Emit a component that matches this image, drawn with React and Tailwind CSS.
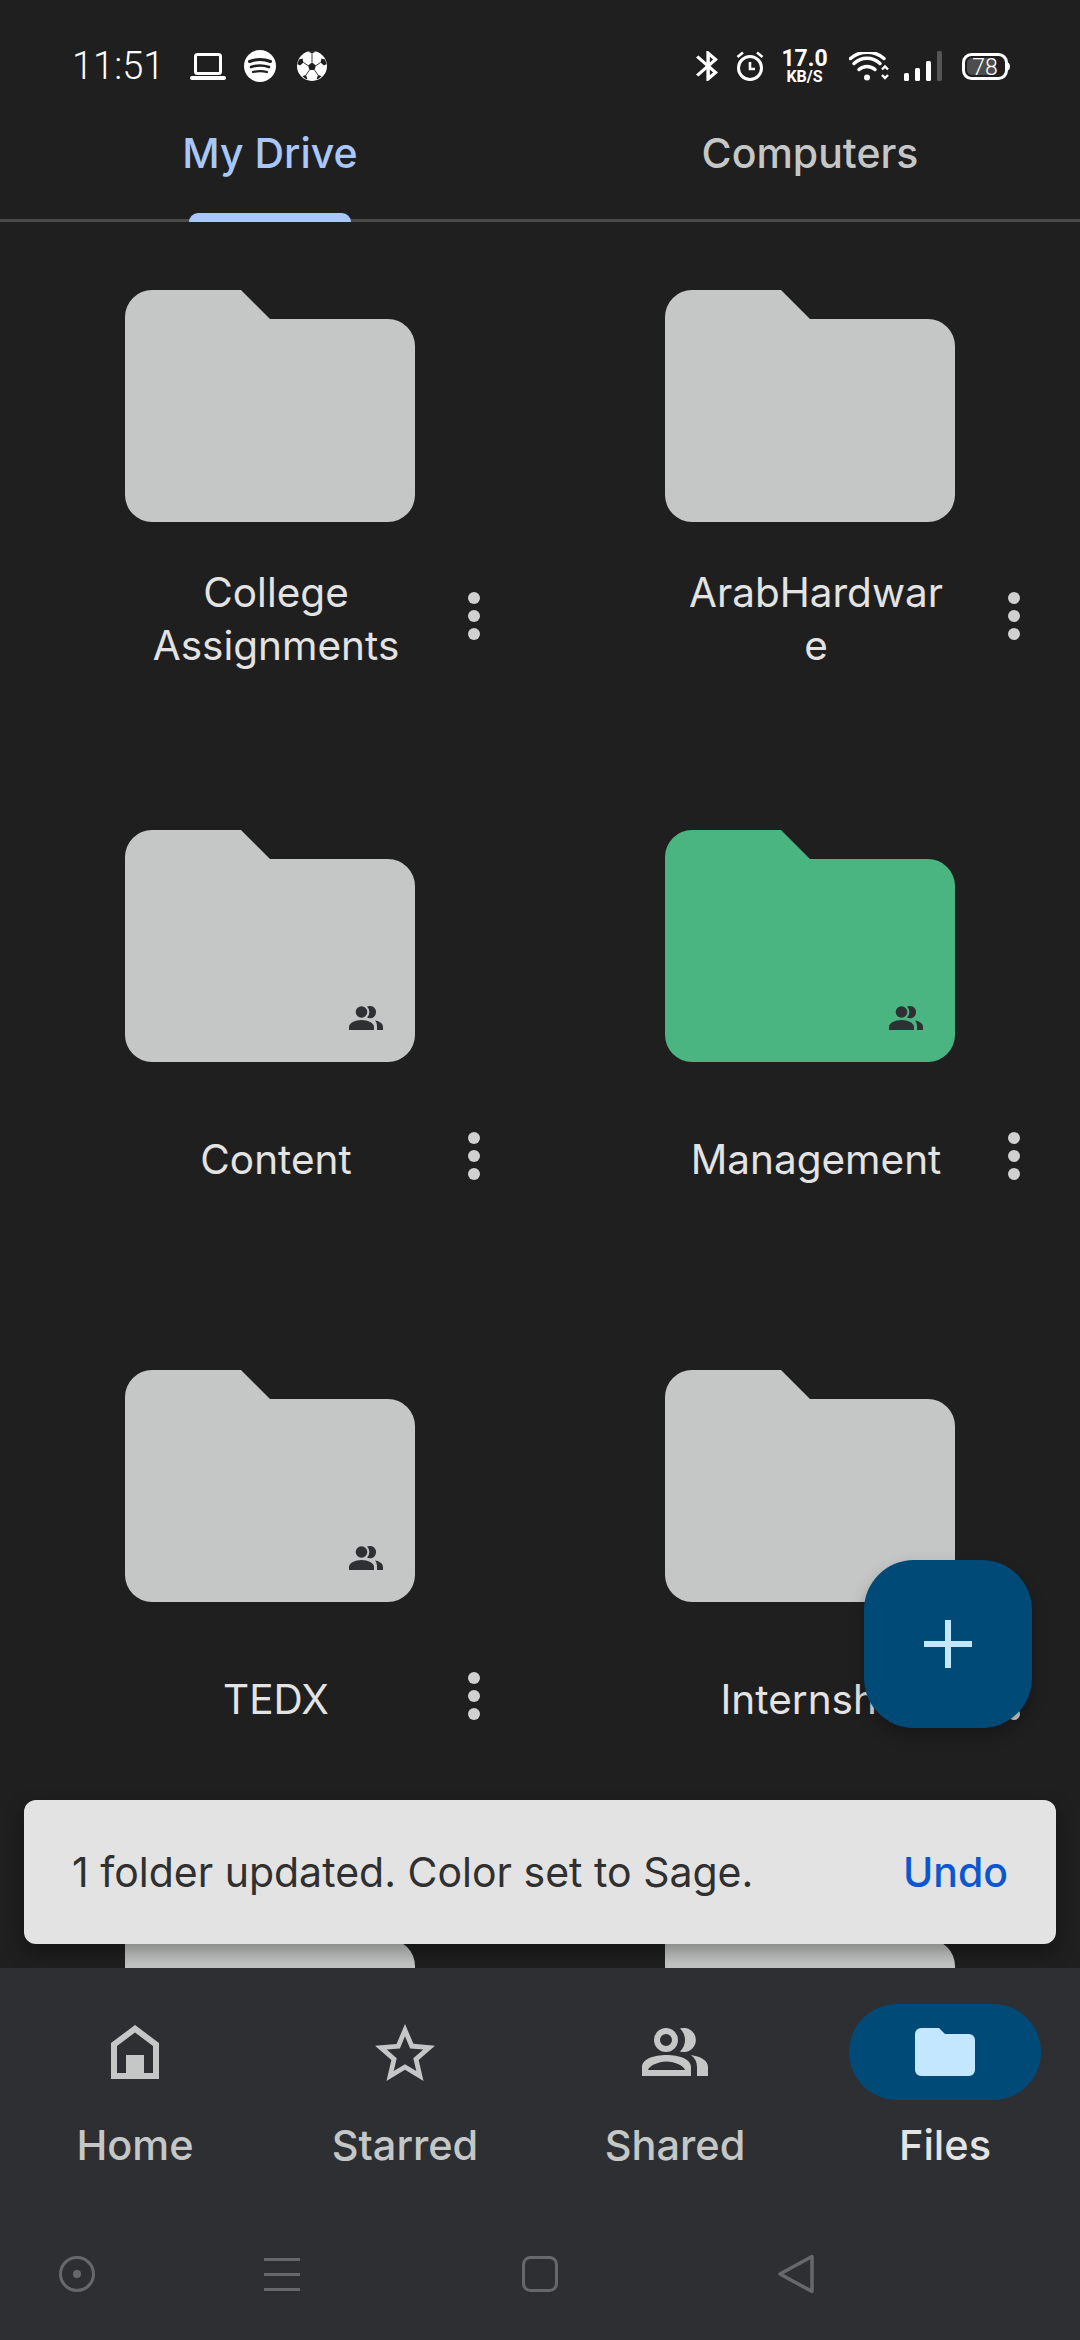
import React from "react";

const folders = [
  { name: "College Assignments", color: "#c4c7c5" },
  { name: "ArabHardware", color: "#c4c7c5" },
  { name: "Content", color: "#c4c7c5", shared: true },
  { name: "Management", color: "#4ab580", shared: true },
  { name: "TEDX", color: "#c4c7c5", shared: true },
  { name: "Internship", color: "#c4c7c5" },
  { name: "", color: "#c4c7c5" },
  { name: "", color: "#c4c7c5" },
];

const Folder = ({ color, shared }) => (
  <svg width="290" height="232" viewBox="0 0 290 232" className="block">
    <path
      d="M27 0H116L145 29H263A27 27 0 0 1 290 56V205A27 27 0 0 1 263 232H27A27 27 0 0 1 0 205V27A27 27 0 0 1 27 0Z"
      fill={color}
    />
    {shared && (
      <g transform="translate(224 176)" fill="#2e3033">
        <circle cx="12.5" cy="6" r="5.8" />
        <path d="M0 24V21C0 17 6 14 12.5 14S25 17 25 21V24Z" />
        <path d="M18 .6A6.2 6.2 0 1 1 18 11.6 7.6 7.6 0 0 0 18 .6Z" />
        <path d="M26 14.5C30.5 15.2 34 17.5 34 21V24H28V21C28 18.4 27.5 16 26 14.5Z" />
      </g>
    )}
  </svg>
);

const FolderCard = ({ name, color, shared }) => (
  <div>
    <div className="pl-[125px]">
      <Folder color={color} shared={shared} />
    </div>
    {name && (
      <div className="mt-[40px] flex h-[108px] items-center pl-[146px]">
        <p className="w-[260px] break-words pt-[6px] text-center text-[40.5px] leading-[53px] text-[#e3e3e3]">{name}</p>
        <div className="ml-[62px] flex flex-col gap-[6px]">
          <span className="size-3 rounded-full bg-[#cfd0cf]" />
          <span className="size-3 rounded-full bg-[#cfd0cf]" />
          <span className="size-3 rounded-full bg-[#cfd0cf]" />
        </div>
      </div>
    )}
  </div>
);

const StatusLeft = () => (
  <div className="flex items-center">
    <span className="font-['Roboto',sans-serif] text-[38px] font-light leading-[40px] text-white">11:51</span>
    {/* laptop */}
    <svg width="36" height="27" viewBox="0 0 36 27" className="ml-[26px]" fill="none">
      <rect x="5.5" y="1.5" width="25" height="19" rx="2" stroke="#fff" strokeWidth="3" />
      <rect x="0" y="23" width="36" height="4" rx="2" fill="#fff" />
    </svg>
    {/* spotify */}
    <svg width="32" height="32" viewBox="0 0 32 32" className="ml-[18px]" fill="none">
      <circle cx="16" cy="16" r="16" fill="#fff" />
      <path d="M5.5 11.5C12 9 20 9 26.5 11.5" stroke="#1f1f1f" strokeWidth="3" strokeLinecap="round" />
      <path d="M7 17C13 15 19 15 25 17" stroke="#1f1f1f" strokeWidth="2.6" strokeLinecap="round" />
      <path d="M9 22C13.5 20.8 18.5 20.8 23 22" stroke="#1f1f1f" strokeWidth="2.2" strokeLinecap="round" />
    </svg>
    {/* soccer ball */}
    <svg width="30" height="30" viewBox="0 0 30 30" className="ml-[21px]">
      <circle cx="15" cy="15" r="15" fill="#fff" />
      <path d="M15 11.5L19 14.5 17.5 19H12.5L11 14.5Z" fill="#1f1f1f" />
      <path d="M11 .6L15 2.6 19 .6 15 0Z" fill="#1f1f1f" />
      <path d="M2 8.5L5.5 7.5 6.5 11.5 3 14.5 .4 13Z" fill="#1f1f1f" />
      <path d="M28 8.5L24.5 7.5 23.5 11.5 27 14.5 29.6 13Z" fill="#1f1f1f" />
      <path d="M5.5 25L9 24 10.5 28.2 8 27.5Z" fill="#1f1f1f" />
      <path d="M24.5 25L21 24 19.5 28.2 22 27.5Z" fill="#1f1f1f" />
      <path d="M15 2.6V11.5M11 14.5L6.5 11.5M19 14.5L23.5 11.5M12.5 19L9 24M17.5 19L21 24" stroke="#1f1f1f" strokeWidth="0.9" fill="none" />
    </svg>
  </div>
);

const StatusRight = () => (
  <div className="flex items-center">
    {/* bluetooth */}
    <svg width="22" height="30" viewBox="5 2 12.71 20" preserveAspectRatio="none" fill="#fff">
      <path d="M17.71 7.71L12 2h-1v7.59L6.41 5 5 6.41 10.59 12 5 17.59 6.41 19 11 14.41V22h1l5.71-5.71-4.3-4.29 4.3-4.29zM13 5.83l1.88 1.88L13 9.59V5.83zm1.88 10.46L13 18.17v-3.76l1.88 1.88z" />
    </svg>
    {/* alarm */}
    <svg width="28" height="30" viewBox="0 0 28 30" className="ml-[18px]" fill="none" stroke="#fff">
      <circle cx="14" cy="17" r="11.5" strokeWidth="3" />
      <path d="M14 11V18H19" strokeWidth="2.6" />
      <path d="M1.5 6L7 1.5M26.5 6L21 1.5" strokeWidth="2.6" />
    </svg>
    <div className="ml-[18px] flex h-[36px] w-[45px] flex-col items-center font-['Roboto',sans-serif] font-bold text-white">
      <span className="h-[21px] text-[23px] leading-[21px]">17.0</span>
      <span className="h-[15px] text-[16px] leading-[15px]">KB/S</span>
    </div>
    {/* wifi */}
    <svg width="40" height="29" viewBox="0 0 40 29" className="ml-[22px]" fill="none" stroke="#fff" strokeLinecap="round">
      <circle cx="18" cy="25.5" r="3" fill="#fff" stroke="none" />
      <path d="M10 17.5A12 12 0 0 1 26 17.5" strokeWidth="3.5" />
      <path d="M5 11.5A19 19 0 0 1 31 11.5" strokeWidth="3.5" />
      <path d="M1.5 6.5A25.5 25.5 0 0 1 35 6.5" strokeWidth="3.5" />
      <path d="M33 17.5L36 14.5 39 17.5M33 23L36 26 39 23" strokeWidth="2.4" strokeLinecap="butt" />
    </svg>
    {/* signal */}
    <svg width="38" height="30" viewBox="0 0 38 30" className="ml-[15px]">
      <rect x="0" y="22" width="5" height="8" rx="1.5" fill="#fff" />
      <rect x="11" y="17" width="5" height="13" rx="1.5" fill="#fff" />
      <rect x="22" y="10" width="5" height="20" rx="1.5" fill="#fff" />
      <rect x="33" y="0" width="5" height="30" rx="1.5" fill="#555" />
    </svg>
    {/* battery */}
    <svg width="48" height="27" viewBox="0 0 48 27" className="ml-[20px]" fill="none">
      <rect x="1.5" y="1.5" width="43" height="24" rx="8" stroke="#fff" strokeWidth="3" />
      <rect x="5" y="5" width="29" height="17" rx="5" fill="#4d4d4d" />
      <path d="M46 9.5C47.5 10.5 48 12 48 13.5S47.5 16.5 46 17.5Z" fill="#fff" />
      <text x="23" y="21.5" textAnchor="middle" fontFamily="Roboto" fontWeight="300" fontSize="23" fill="#fff">78</text>
    </svg>
  </div>
);

const HomeIcon = () => (
  <svg width="48" height="54" viewBox="0 0 48 54" fill="#c4c7c5" fillRule="evenodd">
    <path d="M24 0L48 18V54H0V18ZM24 7.5L6 21V48H15V30H33V48H42V21Z" />
  </svg>
);

const StarIcon = () => (
  <svg width="60" height="57" viewBox="2 2 20 19" fill="#c4c7c5">
    <path d="M22 9.24l-7.19-.62L12 2 9.19 8.63 2 9.24l5.46 4.73L5.82 21 12 17.27 18.18 21l-1.63-7.03L22 9.24zM12 15.4l-3.76 2.27 1-4.28-3.32-2.88 4.38-.38L12 6.1l1.71 4.04 4.38.38-3.32 2.88 1 4.28L12 15.4z" />
  </svg>
);

const SharedIcon = () => (
  <svg width="66" height="48" viewBox="0 0 66 48" fill="#c4c7c5" fillRule="evenodd">
    <path d="M24 0A12 12 0 1 1 24 24 12 12 0 1 1 24 0ZM24 6A6 6 0 1 0 24 18 6 6 0 1 0 24 6Z" />
    <path d="M0 48V39C0 31 12 27 24.5 27S49 31 49 39V48ZM6 42H43C42 38 33 33.5 24.5 33.5S7 38 6 42Z" />
    <path d="M38 .5A12.1 12.1 0 1 1 38 23.5 15.7 15.7 0 0 0 38 .5Z" />
    <path d="M49 27C58 28.5 66 32 66 39V48H55V39C55 34 53 30 49 27Z" />
  </svg>
);

const FilesIcon = () => (
  <svg width="60" height="48" viewBox="0 0 60 48" fill="#c2e7ff">
    <path d="M6 0H24L30 6H54A6 6 0 0 1 60 12V42A6 6 0 0 1 54 48H6A6 6 0 0 1 0 42V6A6 6 0 0 1 6 0Z" />
  </svg>
);

const navItems = [
  { label: "Home", icon: <HomeIcon /> },
  { label: "Starred", icon: <StarIcon /> },
  { label: "Shared", icon: <SharedIcon /> },
  { label: "Files", icon: <FilesIcon />, active: true },
];

const BottomNav = () => (
  <nav className="relative z-20 h-[372px] bg-[#2e2f33]">
    <div className="grid grid-cols-4 pt-[36px]">
      {navItems.map((item) => (
        <div key={item.label} className="flex flex-col items-center">
          <div className={`flex h-[96px] w-[192px] items-center justify-center rounded-full ${item.active ? "bg-[#004a77]" : ""}`}>
            {item.icon}
          </div>
          <span className={`mt-[21px] text-[41.5px] font-medium leading-[48px] ${item.active ? "text-[#e3e3e3]" : "text-[#c4c7c5]"}`}>
            {item.label}
          </span>
        </div>
      ))}
    </div>
    {/* system buttons */}
    <div className="mt-[85px] flex h-[40px] items-center pl-[59px]">
      <svg width="36" height="36" viewBox="0 0 36 36" fill="none">
        <circle cx="18" cy="18" r="16.5" stroke="#67686c" strokeWidth="3" />
        <circle cx="18" cy="18" r="4" fill="#67686c" />
      </svg>
      <svg width="36" height="36" viewBox="0 0 36 36" className="ml-[169px]" fill="#67686c">
        <rect y="2" width="36" height="3" />
        <rect y="17" width="36" height="3" />
        <rect y="32" width="36" height="3" />
      </svg>
      <svg width="36" height="36" viewBox="0 0 36 36" className="ml-[222px]" fill="none">
        <rect x="1.5" y="1.5" width="33" height="33" rx="7" stroke="#67686c" strokeWidth="3" />
      </svg>
      <svg width="36" height="40" viewBox="0 0 36 40" className="ml-[220px]" fill="none">
        <path d="M34 2.5L2 20L34 37.5Z" stroke="#67686c" strokeWidth="3.5" strokeLinejoin="round" />
      </svg>
    </div>
  </nav>
);

export default function App() {
  return (
    <div className="relative flex h-[2340px] w-[1080px] flex-col overflow-hidden bg-[#1f1f1f] font-['Inter',sans-serif]">
      <header>
        <div className="mt-[46px] flex h-[40px] items-center justify-between pl-[72px] pr-[70px]">
          <StatusLeft />
          <StatusRight />
        </div>
        <div className="grid h-[136px] grid-cols-2 border-b-[3px] border-[#4a4a4a]">
          <div className="relative flex flex-col items-center pt-[43px]">
            <span className="text-[41px] font-medium leading-[48px] text-[#a8c7fa]">My Drive</span>
            <span className="absolute bottom-[-3px] left-[189px] h-[9px] w-[162px] rounded-t-[9px] bg-[#a8c7fa]" />
          </div>
          <div className="flex flex-col items-center pt-[43px]">
            <span className="text-[41px] font-medium leading-[48px] text-[#c4c7c5]">Computers</span>
          </div>
        </div>
      </header>

      <main className="grid flex-1 auto-rows-[540px] grid-cols-2 overflow-hidden pt-[68px]">
        {folders.map((f, i) => (
          <FolderCard key={i} {...f} />
        ))}
      </main>

      <BottomNav />

      {/* snackbar */}
      <div className="absolute bottom-[396px] left-[24px] right-[24px] z-10 flex h-[144px] items-center justify-between rounded-[12px] bg-[#e3e3e3] px-[48px] pt-[2px] shadow-[0_8px_20px_rgba(0,0,0,0.35)]">
        <span className="text-[41px] text-[#303030]">1 folder updated. Color set to Sage.</span>
        <span className="text-[41px] font-medium text-[#0b57d0]">Undo</span>
      </div>

      {/* new button */}
      <button className="absolute bottom-[612px] right-[48px] z-10 flex size-[168px] items-center justify-center rounded-[50px] bg-[#004a77] shadow-[0_8px_16px_rgba(0,0,0,0.25)]">
        <svg width="48" height="48" viewBox="0 0 48 48" fill="#c2e7ff">
          <rect x="21" width="6" height="48" />
          <rect y="21" width="48" height="6" />
        </svg>
      </button>
    </div>
  );
}
